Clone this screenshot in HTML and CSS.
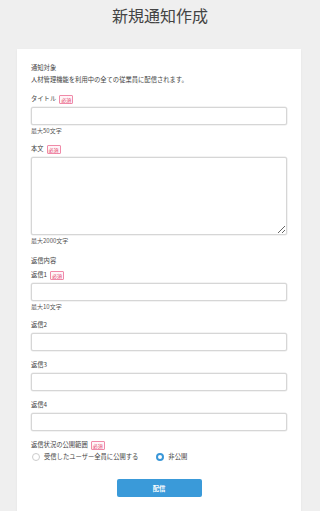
FILE: index.html
```html
<!DOCTYPE html>
<html lang="ja">
<head>
  <meta charset="UTF-8" />
  <meta name="viewport" content="width=device-width, initial-scale=1.0"/>
  <title>新規通知作成</title>
  <link rel="stylesheet" href="styles.css">
</head>
<body>
  <h1 class="page-title">新規通知作成</h1>
  <div class="card">
    <p class="text">通知対象</p>
    <p class="text desc">人材管理機能を利用中の全ての従業員に配信されます。</p>

    <div class="field">
      <label class="label">タイトル<span class="required">必須</span></label>
      <input type="text" class="input" />
      <p class="hint">最大50文字</p>
    </div>

    <div class="field">
      <label class="label">本文<span class="required">必須</span></label>
      <textarea class="input textarea"></textarea>
      <p class="hint">最大2000文字</p>
    </div>

    <div class="group">
      <p class="text group-title">返信内容</p>
      <div class="field">
        <label class="label">返信1<span class="required">必須</span></label>
        <input type="text" class="input" />
        <p class="hint">最大10文字</p>
      </div>
      <div class="field">
        <label class="label">返信2</label>
        <input type="text" class="input" />
      </div>
      <div class="field">
        <label class="label">返信3</label>
        <input type="text" class="input" />
      </div>
      <div class="field">
        <label class="label">返信4</label>
        <input type="text" class="input" />
      </div>
    </div>

    <div class="field">
      <label class="label">返信状況の公開範囲<span class="required">必須</span></label>
      <div class="radios">
        <label class="radio"><input type="radio" name="scope" />受信したユーザー全員に公開する</label>
        <label class="radio"><input type="radio" name="scope" checked />非公開</label>
      </div>
    </div>

    <div class="actions">
      <button class="submit">配信</button>
    </div>
  </div>
</body>
</html>
```

FILE: styles.css
```css
body {
  margin: 0;
  background: #efefef;
  color: #444;
  font-family: "Noto Sans CJK JP", "Noto Sans", sans-serif;
}

p {
  margin: 0;
}

.page-title {
  margin: 5px 0 24px;
  font-size: 16px;
  line-height: 20px;
  font-weight: 400;
  text-align: center;
  color: #444;
}

.card {
  margin: 0 19px 0 17px;
  padding: 14px 14px 14px 14px;
  background: #fff;
  box-shadow: 0 1px 2px rgba(0, 0, 0, 0.06);
}

.text {
  font-size: 6.3px;
  line-height: 10px;
}

.desc {
  margin-top: 2px;
}

.field {
  margin-top: 9px;
}

.label {
  display: flex;
  align-items: center;
  height: 10px;
  font-size: 6.3px;
  line-height: 10px;
}

.required {
  display: inline-block;
  box-sizing: border-box;
  margin-left: 3px;
  padding: 0 1px;
  height: 9px;
  line-height: 7px;
  font-size: 5px;
  color: #e2426c;
  background: #fff5f8;
  border: 1px solid #f08aa8;
  border-radius: 1px;
}

.input {
  display: block;
  box-sizing: border-box;
  width: 100%;
  height: 18px;
  margin: 3px 0 0;
  padding: 0 4px;
  border: 1px solid #d6d6d6;
  border-radius: 2px;
  background: #fff;
  box-shadow: 0 0 0 0.5px #e8e8e8;
  font-family: inherit;
  font-size: 6.3px;
}

.textarea {
  height: 78px;
  resize: vertical;
}

.hint {
  margin-top: 2px;
  font-size: 6px;
  line-height: 8px;
  color: #555;
}

.group {
  margin-top: 11px;
}

.group-title {
  margin-bottom: 4px;
}

.group .field:first-of-type {
  margin-top: 0;
}

.radios {
  display: flex;
  align-items: center;
  gap: 17px;
  margin-top: 2px;
  height: 10px;
}

.radio {
  display: flex;
  align-items: center;
  gap: 4px;
  font-size: 6.3px;
  line-height: 10px;
}

.radio input {
  appearance: none;
  -webkit-appearance: none;
  box-sizing: border-box;
  width: 8px;
  height: 8px;
  margin: 0 0 0 1px;
  border: 1px solid #ccc;
  border-radius: 50%;
  background: #fff;
}

.radio input:checked {
  border: 2.5px solid #3a97d8;
}

.actions {
  display: flex;
  justify-content: center;
  margin-top: 17px;
}

.submit {
  width: 85px;
  height: 18px;
  border: none;
  border-radius: 2px;
  background: #3a9ad9;
  color: #fff;
  font-family: inherit;
  font-size: 6.3px;
  font-weight: bold;
}
```
